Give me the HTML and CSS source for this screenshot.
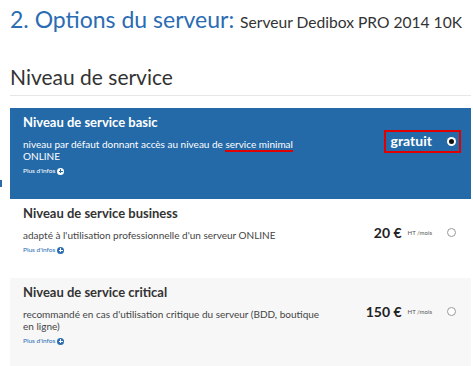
FILE: index.html
```html
<!DOCTYPE html>
<html lang="fr">
<head>
<meta charset="utf-8">
<link rel="stylesheet" href="styles.css">
</head>
<body>
<div class="page">
  <span class="edge-mark"></span>
  <h1 class="page-title">2. Options du serveur: <span class="page-sub">Serveur Dedibox PRO 2014 10K</span></h1>
  <h2 class="section-title">Niveau de service</h2>
  <div class="options">
    <div class="option option-active">
      <div class="option-main">
        <div class="option-name">Niveau de service basic</div>
        <div class="option-desc">niveau par défaut donnant accès au niveau de <span class="mark-line">service minimal</span> ONLINE</div>
        <a class="more">Plus d'infos <span class="plus"></span></a>
      </div>
      <div class="option-price">
        <div class="free-box"><span class="free">gratuit</span><span class="radio radio-on"></span></div>
      </div>
    </div>
    <div class="option option-white">
      <div class="option-main">
        <div class="option-name">Niveau de service business</div>
        <div class="option-desc">adapté à l'utilisation professionnelle d'un serveur ONLINE</div>
        <a class="more">Plus d'infos <span class="plus"></span></a>
      </div>
      <div class="option-price">
        <span class="amount">20 €</span><span class="unit">HT /mois</span><span class="radio"></span>
      </div>
    </div>
    <div class="option option-grey">
      <div class="option-main">
        <div class="option-name">Niveau de service critical</div>
        <div class="option-desc">recommandé en cas d'utilisation critique du serveur (BDD, boutique en ligne)</div>
        <a class="more">Plus d'infos <span class="plus"></span></a>
      </div>
      <div class="option-price">
        <span class="amount">150 €</span><span class="unit">HT /mois</span><span class="radio"></span>
      </div>
    </div>
  </div>
</div>
</body>
</html>
```

FILE: styles.css
```css
* { box-sizing: border-box; }
html, body { margin: 0; padding: 0; background: #fff; }
body { font-family: Lato, "Open Sans", sans-serif; color: #333; }
.page { position: relative; padding: 0 2px 0 10px; }
.edge-mark { position: absolute; left: 0; top: 180px; width: 2px; height: 7px; background: #2a6aa8; }
.page-title {
  margin: 0; padding-top: 2px; white-space: nowrap;
  font-weight: 400; font-size: 23px; line-height: 34px;
  color: #2b6cb3;
}
.page-sub { font-size: 15.6px; color: #333; }
.section-title {
  margin: 24px 0 0; padding-bottom: 4px;
  font-weight: 400; font-size: 21px; line-height: 28px; color: #333;
  border-bottom: 1px solid #e6e6e6;
}
.options { margin-top: 12px; display: flex; flex-direction: column; }
.option { display: flex; align-items: flex-start; padding: 6px 15px 0 13px; }
.option-active { background: #246aa8; color: #fff; height: 91px; }
.option-white { background: #fff; height: 79px; }
.option-grey { background: #f7f7f7; height: 91px; }
.option-main { flex: 1; }
.option-name { font-weight: 700; font-size: 13px; line-height: 17px; }
.option-desc { margin-top: 7px; font-size: 10px; line-height: 12px; width: 305px; color: #444; }
.option-active .option-desc { width: 275px; color: #fff; }
.mark-line { border-bottom: 2px solid #e00000; }
.more { display: flex; align-items: center; gap: 2px; margin-top: 4px; font-size: 6.5px; line-height: 10px; color: #2b6cb3; }
.option-active .more { color: #fff; }
.plus { position: relative; width: 7px; height: 7px; border-radius: 50%; background: #2b6cb3; }
.option-active .plus { background: #fff; }
.plus::before, .plus::after { content: ""; position: absolute; background: #fff; }
.option-active .plus::before, .option-active .plus::after { background: #246aa8; }
.plus::before { left: 1.5px; top: 3px; width: 4px; height: 1px; }
.plus::after { left: 3px; top: 1.5px; width: 1px; height: 4px; }
.option-price { display: flex; align-items: center; height: 18px; margin-top: 18px; }
.free-box { display: flex; align-items: center; gap: 15px; border: 2px solid #e00000; height: 23px; padding: 0 3px 0 5px; margin-right: -5px; }
.free { font-weight: 700; font-size: 14px; line-height: 18px; color: #fff; }
.amount { font-weight: 700; font-size: 14px; color: #222; }
.unit { font-size: 6px; color: #555; margin: 0 15px 0 6px; }
.radio { width: 9px; height: 9px; border-radius: 50%; border: 1px solid #999; background: #fff; }
.radio-on { border: none; position: relative; }
.radio-on::after { content: ""; position: absolute; left: 2px; top: 2px; width: 5px; height: 5px; border-radius: 50%; background: #111; }
```
